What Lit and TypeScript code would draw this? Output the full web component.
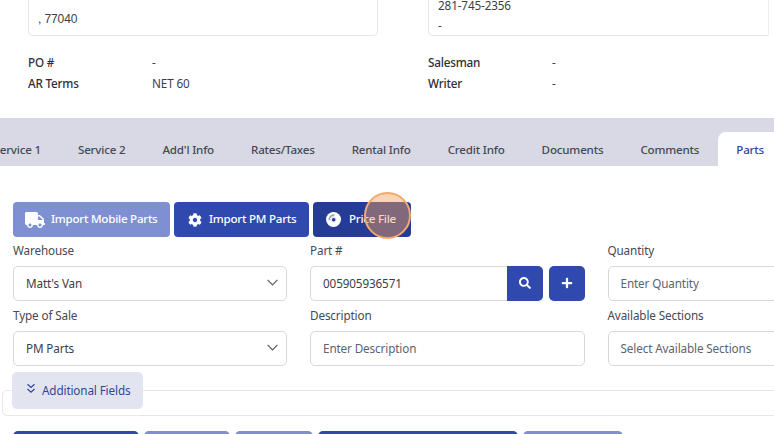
import { LitElement, html, css, svg } from "lit";
import { customElement } from "lit/decorators.js";

const truck = svg`<svg class="ic truck" viewBox="0 0 640 512"><path fill="#fff" d="M624 352h-16V243.9c0-12.7-5.1-24.9-14.1-33.9L494 110.1c-9-9-21.2-14.1-33.9-14.1H416V48c0-26.5-21.5-48-48-48H48C21.5 0 0 21.5 0 48v320c0 26.5 21.5 48 48 48h16c0 53 43 96 96 96s96-43 96-96h128c0 53 43 96 96 96s96-43 96-96h48c8.8 0 16-7.2 16-16v-32c0-8.8-7.2-16-16-16zM160 464c-26.5 0-48-21.5-48-48s21.5-48 48-48 48 21.5 48 48-21.5 48-48 48zm320 0c-26.5 0-48-21.5-48-48s21.5-48 48-48 48 21.5 48 48-21.5 48-48 48zm80-208H416V144h44.1l99.9 99.9V256z"/></svg>`;
const cog = svg`<svg class="ic cog" viewBox="0 0 512 512"><path fill="#fff" d="M487.4 315.7l-42.6-24.6c4.3-23.2 4.3-47 0-70.2l42.6-24.6c4.9-2.8 7.1-8.6 5.5-14-11.1-35.6-30-67.8-54.7-94.6-3.8-4.1-10-5.1-14.8-2.3L380.8 110c-17.9-15.4-38.5-27.3-60.8-35.1V25.8c0-5.6-3.9-10.5-9.4-11.7-36.7-8.2-74.3-7.8-109.2 0-5.5 1.2-9.4 6.1-9.4 11.7V75c-22.2 7.9-42.8 19.8-60.8 35.1L88.7 85.5c-4.9-2.8-11-1.9-14.8 2.3-24.7 26.7-43.6 58.9-54.7 94.6-1.7 5.4.6 11.2 5.5 14L67.3 221c-4.3 23.2-4.3 47 0 70.2l-42.6 24.6c-4.9 2.8-7.1 8.6-5.5 14 11.1 35.6 30 67.8 54.7 94.6 3.8 4.1 10 5.1 14.8 2.3l42.6-24.6c17.9 15.4 38.5 27.3 60.8 35.1v49.2c0 5.6 3.9 10.5 9.4 11.7 36.7 8.2 74.3 7.8 109.2 0 5.5-1.2 9.4-6.1 9.4-11.7v-49.2c22.2-7.9 42.8-19.8 60.8-35.1l42.6 24.6c4.9 2.8 11 1.9 14.8-2.3 24.7-26.7 43.6-58.9 54.7-94.6 1.5-5.5-.7-11.3-5.6-14.1zM256 336c-44.1 0-80-35.9-80-80s35.9-80 80-80 80 35.9 80 80-35.9 80-80 80z"/></svg>`;
const disc = svg`<svg class="ic disc" viewBox="0 0 16 16"><circle cx="8" cy="8" r="8" fill="#fff"/><path d="M3.6 9A4.6 4.6 0 0 1 9 3.6" fill="none" stroke="#9aa3c8" stroke-width="2"/><circle cx="8" cy="8" r="3.3" fill="#e8eaf3"/><circle cx="8.2" cy="8.2" r="1.9" fill="#263b93"/></svg>`;
const search = svg`<svg class="sym" viewBox="0 0 512 512"><path fill="#fff" d="M505 442.7L405.3 343c-4.5-4.5-10.6-7-17-7H372c27.6-35.3 44-79.7 44-128C416 93.1 322.9 0 208 0S0 93.1 0 208s93.1 208 208 208c48.3 0 92.7-16.4 128-44v16.3c0 6.4 2.5 12.5 7 17l99.7 99.7c9.4 9.4 24.6 9.4 33.9 0l28.3-28.3c9.4-9.4 9.4-24.6.1-34zM208 336c-70.7 0-128-57.2-128-128 0-70.7 57.2-128 128-128 70.7 0 128 57.2 128 128 0 70.7-57.2 128-128 128z"/></svg>`;
const plus = svg`<svg class="sym" viewBox="0 0 448 512"><path fill="#fff" d="M416 208H272V64c0-17.67-14.33-32-32-32h-32c-17.67 0-32 14.33-32 32v144H32c-17.67 0-32 14.33-32 32v32c0 17.67 14.33 32 32 32h144v144c0 17.67 14.33 32 32 32h32c17.67 0 32-14.33 32-32V304h144c17.67 0 32-14.33 32-32v-32c0-17.67-14.33-32-32-32z"/></svg>`;
const chevron = svg`<svg class="chev" viewBox="0 0 11 7"><path d="M.6.9 5.5 5.8 10.4.9" fill="none" stroke="#555d68" stroke-width="1.2"/></svg>`;
const dbl = svg`<svg class="dbl" viewBox="0 0 10 11"><path d="M1.5 1.2 5 4.4l3.5-3.2M1.5 6 5 9.2 8.5 6" fill="none" stroke="#2f459c" stroke-width="1.2"/></svg>`;

@customElement("app-root")
export class AppRoot extends LitElement {
  static styles = css`
    :host { display: block; width: 774px; height: 434px; overflow: hidden; background: #fff; font-family: "Noto Sans", sans-serif; font-size: 11.7px; letter-spacing: -0.12px; color: #3b4048; }
    .top { display: grid; grid-template-columns: 350px 360px; column-gap: 50px; padding-left: 28px; height: 118px; }
    .card { height: 36px; box-sizing: border-box; border: 1px solid #e6e6e9; border-top: 0; border-radius: 0 0 5px 5px; padding-left: 9px; display: flex; flex-direction: column; justify-content: flex-end; line-height: 21px; }
    .card.addr { font-family: "Liberation Sans", sans-serif; font-size: 12px; letter-spacing: -0.1px; padding-bottom: 5px; }
    .card.right { width: 341px; border-radius: 0 0 0 5px; border-right: 1px solid #eeeef0; }
    .card.right span { height: 20px; }
    .card.right span:first-child { margin-top: -4px; }
    .meta { display: grid; grid-template-columns: 124px auto; row-gap: 4px; margin-top: 18px; line-height: 17px; }
    .meta b { font-weight: 500; color: #2c3038; letter-spacing: -0.2px; }
    .meta span { color: #3b4048; }
    .tabs { height: 48px; background: #d9d9e5; display: flex; align-items: flex-end; white-space: nowrap; font-weight: 500; color: #444952; font-size: 11.6px; letter-spacing: -0.19px; }
    .track { display: flex; margin-left: -25px; }
    .tab { height: 34px; line-height: 35px; padding: 0 18.5px; flex: none; }
    .tab.on { background: #fff; color: #2f459c; border-radius: 8px 0 0 0; padding-right: 30px; }
    .actions { display: flex; gap: 4px; margin: 36px 0 0 13px; position: relative; font-size: 11.6px; letter-spacing: -0.25px; }
    .btn { height: 35px; border-radius: 4px; display: flex; align-items: center; box-sizing: border-box; color: #fff; font-weight: 500; white-space: nowrap; padding-bottom: 2px; }
    .light { background: #7e90d2; }
    .mid { background: #2f49ae; }
    .dark { background: #263b93; }
    .ic { flex: none; margin-top: 2px; }
    .truck { width: 20px; height: 16px; margin: 2px 6px 0 12px; }
    .cog { width: 14px; height: 14px; margin: 2px 7px 0 14px; }
    .disc { width: 15px; height: 15px; margin: 2px 8px 0 13px; }
    .spot { position: absolute; left: 351px; top: -10px; width: 47px; height: 47px; box-sizing: border-box; border-radius: 50%; border: 2px solid #f2a96b; background: rgba(243, 160, 95, 0.45); }
    .form { display: grid; grid-template-columns: 274px 274.5px 275px; column-gap: 23px; margin: 5px 0 0 13px; width: 870px; }
    .field { display: flex; flex-direction: column; height: 65px; }
    label { line-height: 17px; height: 16px; color: #444952; }
    .box { margin-top: 8px; height: 35px; box-sizing: border-box; border: 1px solid #d9d9dd; border-radius: 5px; display: flex; align-items: center; justify-content: space-between; padding: 0 8px 2px 12px; color: #3b4048; background: #fff; }
    .ph { color: #5d636b; }
    .chev { width: 11px; height: 7px; }
    .combo { display: flex; margin-top: 8px; height: 35px; }
    .combo .box { margin-top: 0; flex: 1; border-right: 0; border-radius: 5px 0 0 5px; }
    .sbtn, .pbtn { width: 36px; background: #2f49ae; display: flex; align-items: center; justify-content: center; border-radius: 0 5px 5px 0; flex: none; }
    .pbtn { margin-left: 6px; border-radius: 5px; }
    .sym { width: 12px; height: 12px; margin-top: -2px; }
    .more { position: relative; height: 57px; margin-left: 13px; }
    .panel { position: absolute; left: -11px; top: 18px; height: 26px; width: 900px; box-sizing: border-box; border: 1px solid #e8e8eb; border-radius: 5px; }
    .addl { position: absolute; left: -1px; top: 0; width: 131px; height: 37px; background: #e2e5f0; border-radius: 5px; display: flex; align-items: center; padding: 0 0 1px 14px; box-sizing: border-box; color: #2f459c; gap: 6px; white-space: nowrap; }
    .dbl { width: 10px; height: 11px; flex: none; margin-top: -3px; }
    .row { display: flex; gap: 5px; margin-left: 13px; margin-top: 2px; }
    .row div { height: 20px; border-radius: 5px 5px 0 0; }
    .w157 { width: 157px; } .w135 { width: 135px; } .w98 { width: 98px; }
    .w126 { width: 126px; } .w86 { width: 86px; } .w78 { width: 78px; } .w200 { width: 200px; } .w100 { width: 100px; }
  `;
  render() {
    return html`
      <div class="top">
        <div>
          <div class="card addr">, 77040</div>
          <div class="meta"><b>PO #</b><span>-</span><b>AR Terms</b><span>NET 60</span></div>
        </div>
        <div>
          <div class="card right"><span>281-745-2356</span><span>-</span></div>
          <div class="meta"><b>Salesman</b><span>-</span><b>Writer</b><span>-</span></div>
        </div>
      </div>
      <div class="tabs"><div class="track">
        <div class="tab">Service 1</div><div class="tab">Service 2</div><div class="tab">Add'l Info</div><div class="tab">Rates/Taxes</div><div class="tab">Rental Info</div><div class="tab">Credit Info</div><div class="tab">Documents</div><div class="tab">Comments</div><div class="tab on">Parts</div>
      </div></div>
      <div class="actions">
        <div class="btn light w157">${truck}Import Mobile Parts</div>
        <div class="btn mid w135">${cog}Import PM Parts</div>
        <div class="btn dark w98">${disc}Price File</div>
        <div class="spot"></div>
      </div>
      <div class="form">
        <div class="field"><label>Warehouse</label><div class="box">Matt's Van ${chevron}</div></div>
        <div class="field"><label>Part #</label><div class="combo"><div class="box">005905936571</div><div class="sbtn">${search}</div><div class="pbtn">${plus}</div></div></div>
        <div class="field"><label>Quantity</label><div class="box"><span class="ph">Enter Quantity</span></div></div>
        <div class="field"><label>Type of Sale</label><div class="box">PM Parts ${chevron}</div></div>
        <div class="field"><label>Description</label><div class="box"><span class="ph">Enter Description</span></div></div>
        <div class="field"><label>Available Sections</label><div class="box"><span class="ph">Select Available Sections</span></div></div>
      </div>
      <div class="more">
        <div class="panel"></div>
        <div class="addl">${dbl}Additional Fields</div>
      </div>
      <div class="row">
        <div class="btn mid w126"></div>
        <div class="btn light w86"></div>
        <div class="btn light w78"></div>
        <div class="btn mid w200"></div>
        <div class="btn light w100"></div>
      </div>
    `;
  }
}
